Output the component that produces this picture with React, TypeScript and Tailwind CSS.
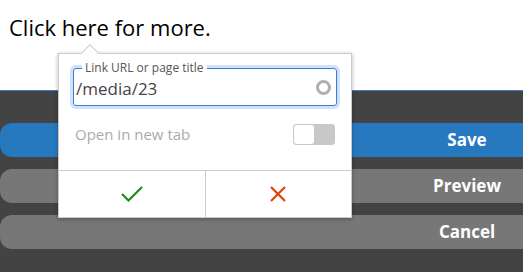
import React from "react";

export default function App() {
  const font = { fontFamily: '"Open Sans", "Noto Sans", sans-serif' };
  return (
    <div className="relative w-[523px] h-[272px] overflow-hidden bg-[#434343]" style={font}>
      <div className="h-[90px] bg-white border-b border-[#3f7bd3] box-content">
        <div className="pl-[9px] pt-[11px] text-[22px] leading-[32px] text-black">Click here for more.</div>
      </div>
      <div className="flex flex-col gap-[12px] pt-[32px]">
        <div className="h-[34px] rounded-l-[12px] bg-[#2779bf] flex justify-end items-center">
          <span className="w-[112px] text-center text-white font-bold text-[17px]">Save</span>
        </div>
        <div className="h-[34px] rounded-l-[12px] bg-[#777777] flex justify-end items-center">
          <span className="w-[112px] text-center text-white font-bold text-[17px]">Preview</span>
        </div>
        <div className="h-[34px] rounded-l-[12px] bg-[#777777] flex justify-end items-center">
          <span className="w-[112px] text-center text-white font-bold text-[17px]">Cancel</span>
        </div>
      </div>

      {/* popup */}
      <div className="absolute left-[58px] top-[53px] w-[294px] h-[165px] bg-white border border-[#cccccc] shadow-[0_1px_4px_rgba(0,0,0,0.3)] flex flex-col">
        <div className="absolute left-[21px] -top-[11px] w-[20px] h-[11px] overflow-hidden">
          <div className="absolute left-[3px] top-[4px] w-[14px] h-[14px] bg-white border border-[#cccccc] rotate-45" />
        </div>
        <div className="pt-[14px] px-[14px]">
          <div className="relative h-[38px] rounded-[3px] border border-[#3f7bd3] shadow-[0_0_0_3px_#cfe2fb] flex items-center pl-[2px] pr-[5px]">
            <span className="absolute left-[8px] -top-[9px] bg-white px-[3px] text-[12px] leading-[16px] text-[#555]">Link URL or page title</span>
            <span className="flex-1 text-[17px] text-[#444] pt-[3px]">/media/23</span>
            <span className="w-[15px] h-[15px] rounded-full border-[3px] border-[#b0b0b0] mt-[1px]" />
          </div>
        </div>
        <div className="flex items-center justify-between pl-[16px] pr-[16px] mt-[16px] h-[24px]">
          <span className="text-[15px] text-[#aaaaaa]">Open in new tab</span>
          <div className="w-[42px] h-[21px] rounded-[3px] bg-[#c8c8c8] border border-[#c8c8c8] relative">
            <div className="absolute left-0 top-0 w-[20px] h-[19px] bg-white rounded-[3px]" />
          </div>
        </div>
        <div className="mt-auto h-[47px] border-t border-[#cccccc] flex">
          <div className="flex-1 border-r border-[#cccccc] flex items-center justify-center">
            <svg width="24" height="18" viewBox="0 0 24 18">
              <path d="M2 9 L8.5 15.5 L22 2" fill="none" stroke="#1c8a1c" strokeWidth="2.2" />
            </svg>
          </div>
          <div className="flex-1 flex items-center justify-center">
            <svg width="18" height="18" viewBox="0 0 18 18">
              <path d="M2 2 L16 16 M16 2 L2 16" fill="none" stroke="#e0400c" strokeWidth="2.2" />
            </svg>
          </div>
        </div>
      </div>
    </div>
  );
}
